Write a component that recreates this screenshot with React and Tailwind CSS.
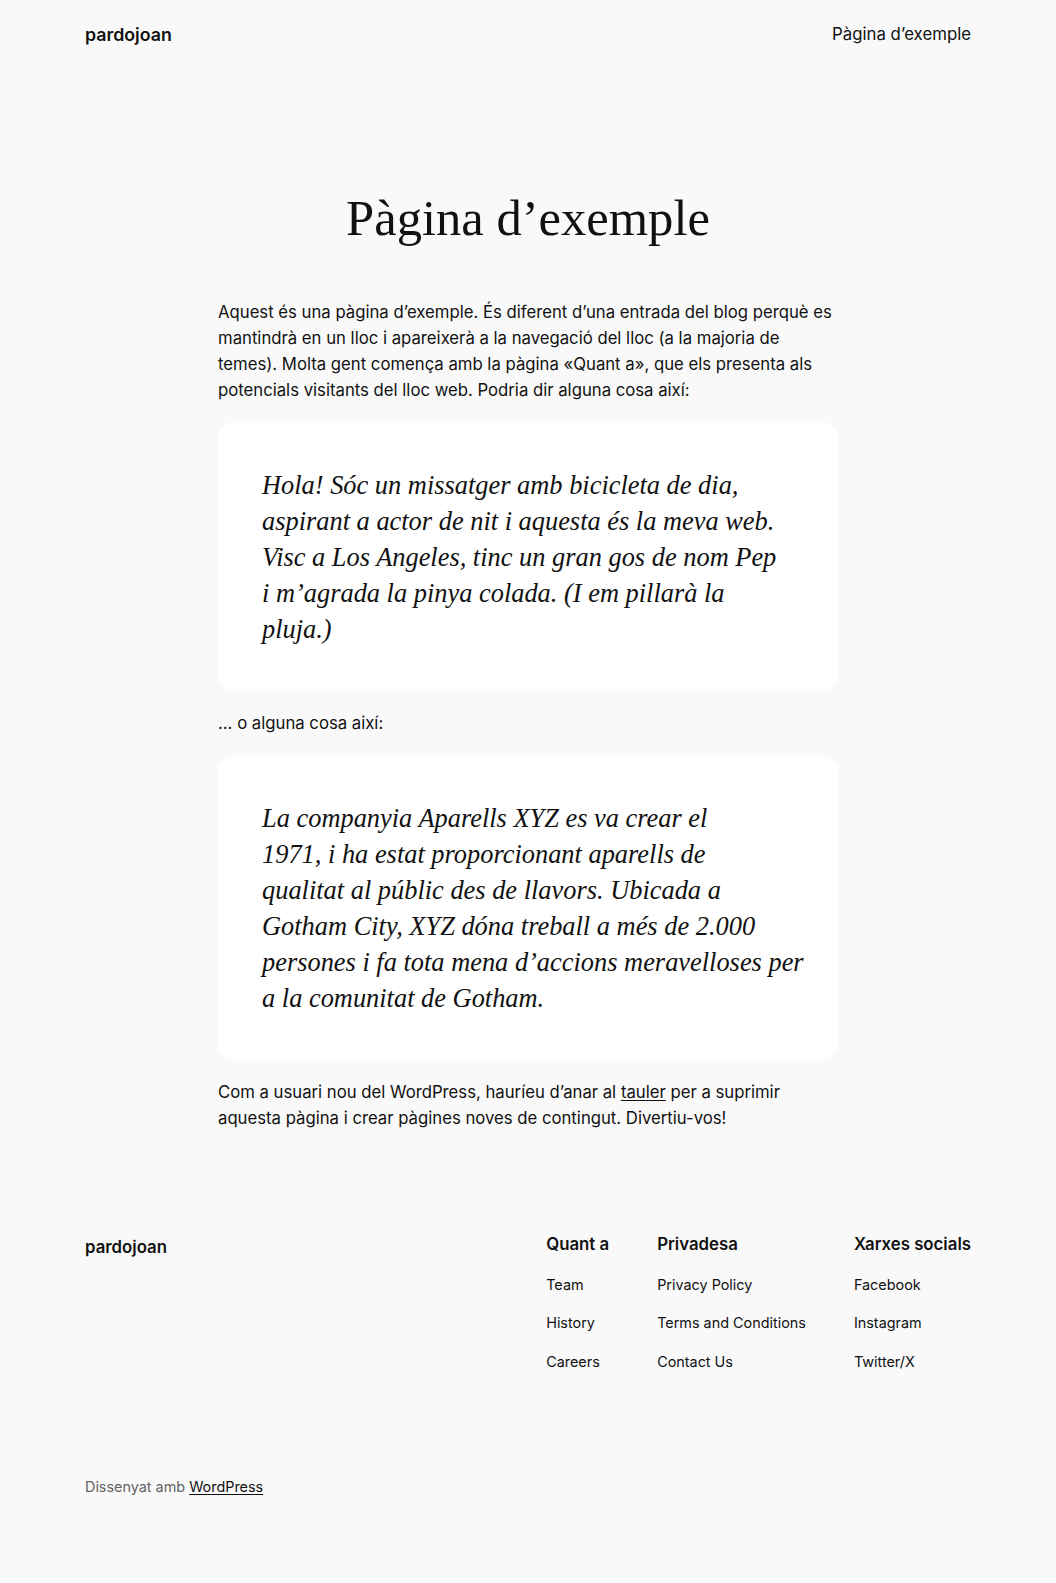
import React from 'react';

const sans = "font-['Inter','Noto_Sans',sans-serif]";
const serif = "font-['Liberation_Serif','DejaVu_Serif',serif]";

const quoteOne = [
  'Hola! Sóc un missatger amb bicicleta de dia,',
  'aspirant a actor de nit i aquesta és la meva web.',
  'Visc a Los Angeles, tinc un gran gos de nom Pep',
  'i m’agrada la pinya colada. (I em pillarà la',
  'pluja.)',
];

const quoteTwo = [
  'La companyia Aparells XYZ es va crear el',
  '1971, i ha estat proporcionant aparells de',
  'qualitat al públic des de llavors. Ubicada a',
  'Gotham City, XYZ dóna treball a més de 2.000',
  'persones i fa tota mena d’accions meravelloses per',
  'a la comunitat de Gotham.',
];

const footerCols = [
  { title: 'Quant a', links: ['Team', 'History', 'Careers'] },
  { title: 'Privadesa', links: ['Privacy Policy', 'Terms and Conditions', 'Contact Us'] },
  { title: 'Xarxes socials', links: ['Facebook', 'Instagram', 'Twitter/X'] },
];

const Quote = ({ lines }) => (
  <blockquote className="bg-white rounded-2xl p-[44px]">
    <p className={`${serif} italic text-[26.4px] leading-[36px] text-[#111111]`}>
      {lines.map((l, i) => (
        <span key={i} className="block whitespace-nowrap">{l}</span>
      ))}
    </p>
  </blockquote>
);

const App = () => {
  return (
    <div className={`min-h-[1583px] bg-[#f9f9f9] text-[#111111] ${sans}`}>
      {/* Header */}
      <header className="h-[68px] pt-[2px] px-[85px] flex items-center justify-between">
        <a className="text-[17.8px] font-semibold">pardojoan</a>
        <nav className="text-[16.8px]">Pàgina d’exemple</nav>
      </header>

      <main className="pt-[120px]">
        <h1 className={`${serif} text-[50.6px] leading-[60px] text-center`}>
          Pàgina d’exemple
        </h1>

        <div className="w-[620px] mx-auto mt-[51px] flex flex-col gap-[19.5px] text-[16.72px] leading-[26px]">
          <p>
            Aquest és una pàgina d’exemple. És diferent d’una entrada del blog perquè es mantindrà en un lloc i
            apareixerà a la navegació del lloc (a la majoria de temes). Molta gent comença amb la pàgina «Quant a»,
            que els presenta als potencials visitants del lloc web. Podria dir alguna cosa així:
          </p>
          <Quote lines={quoteOne} />
          <p>... o alguna cosa així:</p>
          <Quote lines={quoteTwo} />
          <p>
            Com a usuari nou del WordPress, hauríeu d’anar al{' '}
            <a className="underline underline-offset-2">tauler</a> per a suprimir aquesta pàgina i crear pàgines
            noves de contingut. Divertiu-vos!
          </p>
        </div>
      </main>

      {/* Footer */}
      <footer className="px-[85px] pt-[100px] pb-[86px]">
        <div className="flex justify-between items-start">
          <a className="text-[16.8px] font-semibold leading-[26px] mt-[3px]">pardojoan</a>
          <div className="flex gap-[48px]">
            {footerCols.map((col) => (
              <div key={col.title}>
                <h2 className="text-[16.8px] font-semibold leading-[26px]">{col.title}</h2>
                <ul className="mt-[17px] flex flex-col gap-[16.4px] text-[14.4px] leading-[22px]">
                  {col.links.map((l) => (
                    <li key={l}>{l}</li>
                  ))}
                </ul>
              </div>
            ))}
          </div>
        </div>
        <p className="mt-[103px] text-[14.4px] leading-[22px] text-[#636363]">
          Dissenyat amb <a className="underline underline-offset-2 text-[#111111]">WordPress</a>
        </p>
      </footer>
    </div>
  );
};

export default App;
